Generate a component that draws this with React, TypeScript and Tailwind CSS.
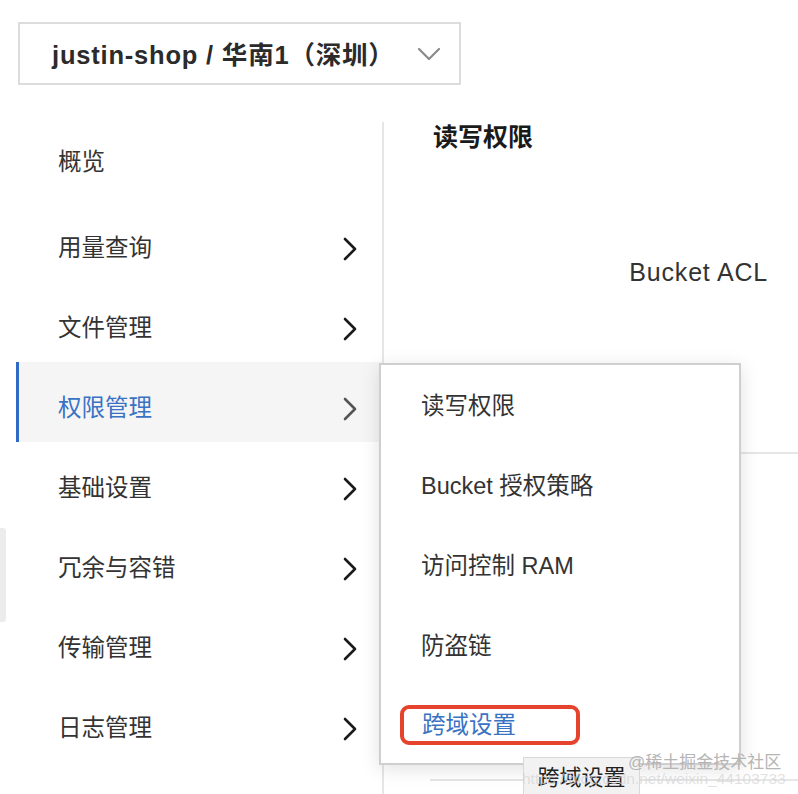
import React from "react";

const font = { fontFamily: '"Liberation Sans", "Noto Sans CJK SC", sans-serif' };

const menu = [
    { label: "概览", arrow: false },
    { label: "用量查询", arrow: true },
    { label: "文件管理", arrow: true },
    { label: "权限管理", arrow: true, active: true },
    { label: "基础设置", arrow: true },
    { label: "冗余与容错", arrow: true },
    { label: "传输管理", arrow: true },
    { label: "日志管理", arrow: true },
];

const subMenu = ["读写权限", "Bucket 授权策略", "访问控制 RAM", "防盗链"];

function ChevronRight({ color }: { color: string }) {
    return (
        <svg width="16" height="24" viewBox="0 0 16 24" fill="none">
            <path d="M3 2 L13 12 L3 22" stroke={color} strokeWidth="2.6" strokeLinecap="round" strokeLinejoin="round" />
        </svg>
    );
}

export default function App() {
    return (
        <div className="relative w-[798px] h-[794px] overflow-hidden bg-white text-[#333]" style={font}>
            {/* bucket / region selector */}
            <div className="h-[122px] pt-[22px] pl-[18px]">
                <div className="w-[443px] h-[63px] border-2 border-[#dcdcdc] flex items-center justify-between pl-[32px] pr-[18px]">
                    <span className="text-[25.5px] font-semibold text-[#2b2b2b] tracking-[0.8px] pt-[3px]">justin-shop / 华南1（深圳）</span>
                    <svg width="24" height="16" viewBox="0 0 24 16" fill="none">
                        <path d="M2 3 L12 13 L22 3" stroke="#8a8a8a" strokeWidth="2.2" strokeLinecap="round" strokeLinejoin="round" />
                    </svg>
                </div>
            </div>

            <div className="flex">
                {/* sidebar */}
                <div className="w-[384px] h-[672px] pl-[16px] border-r-2 border-[#e6e6e6]">
                    {menu.map((item, i) => (
                        <div
                            key={item.label}
                            className={`flex items-center justify-between h-[80px] pl-[39px] pr-[24px] border-l-[3px] ${
                                i === 0 ? "pt-[2px]" : "pt-[14px]"
                            } ${item.active ? "border-[#2f6bc4] bg-[#f5f5f5] text-[#3a72c4]" : "border-transparent"}`}
                        >
                            <span className="text-[23.5px]">{item.label}</span>
                            {item.arrow && <ChevronRight color={item.active ? "#555" : "#1a1a1a"} />}
                        </div>
                    ))}
                </div>

                {/* content */}
                <div className="flex-1">
                    <div className="pl-[49px] h-[30px] leading-[30px] text-[25px] font-bold text-[#1a1a1a]">读写权限</div>
                    <div className="mt-[105px] h-[30px] leading-[30px] flex justify-end pr-[30px] text-[25px] tracking-[0.8px] text-[#333]">
                        Bucket ACL
                    </div>
                    <div className="mt-[165px] border-b-2 border-[#e6e6e6]" />
                    <div className="mt-[325px] ml-[46px] border-b-2 border-[#e6e6e6]" />
                </div>
            </div>

            {/* left edge tab */}
            <div className="absolute left-0 top-[528px] w-[6px] h-[94px] bg-[#ececec] rounded-r-[3px]" />

            {/* submenu dropdown */}
            <div className="absolute left-[379px] top-[363px] w-[362px] h-[402px] bg-white border-2 border-[#cfcfcf] shadow-[0_4px_18px_rgba(0,0,0,0.12)]">
                {subMenu.map((s) => (
                    <div key={s} className="h-[80px] flex items-center pl-[40px] pt-[4px] text-[23.5px] text-[#333]">
                        {s}
                    </div>
                ))}
                <div className="h-[80px] flex items-center pl-[19px]">
                    <div className="w-[180px] h-[40px] border-[4px] border-[#e5432e] rounded-[9px] flex items-center pl-[18px] pt-[2px] text-[23.5px] text-[#3a72c4]">
                        跨域设置
                    </div>
                </div>
            </div>

            {/* tooltip */}
            <div className="absolute left-[523px] top-[757px] w-[117px] h-[40px] bg-[#f2f2f2] border border-[#d8d8d8] flex items-center justify-center text-[22px] text-[#222]">
                跨域设置
            </div>

            {/* watermark */}
            <div className="absolute left-[522px] top-[767px] text-[15.5px] text-[#d4d4d4]/70 whitespace-nowrap">
                https://blog.csdn.net/weixin_44103733
            </div>
            <div className="absolute left-[628px] top-[750px] text-[17px] text-[#b5b5b5] whitespace-nowrap">@稀土掘金技术社区</div>
        </div>
    );
}
